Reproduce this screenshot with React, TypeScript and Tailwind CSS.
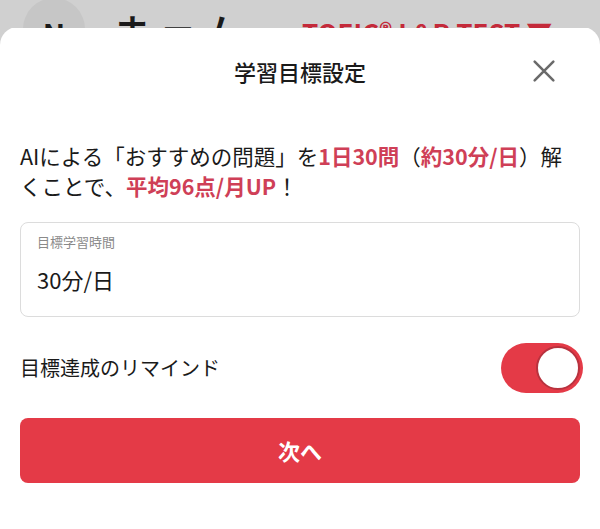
import { useState } from 'react'

// ── Background (page behind the sheet) ────────────────────────────────────────

function BehindHeader() {
  return (
    <div className="h-[28px] overflow-hidden bg-[#d0d0d0] relative">
      <div className="absolute left-[23px] top-[-2px] w-[62px] h-[62px] rounded-full bg-[#c6c6c6] flex items-center justify-center">
        <span className="text-[30px] font-bold text-[#1a1a1a] mt-[8px]">N</span>
      </div>
      <span className="absolute left-[116px] top-[12px] text-[32px] font-bold text-[#1a1a1a] tracking-[14px] leading-none">ホーム</span>
      <span className="absolute left-[302px] top-[19px] text-[26px] font-bold text-[#c42a3a] leading-none whitespace-nowrap">
        TOEIC® L&amp;R TEST ▼
      </span>
    </div>
  )
}

// ── Sheet ─────────────────────────────────────────────────────────────────────

function Toggle({ on, onChange }: { on: boolean; onChange: () => void }) {
  return (
    <button
      onClick={onChange}
      className={`w-[82px] h-[50px] rounded-full flex items-center p-[3px] ${on ? 'bg-[#e43a47] justify-end' : 'bg-[#e5e5e5] justify-start'}`}
    >
      <span className="w-[44px] h-[44px] rounded-full bg-white border-[2px] border-[#b8323e]" />
    </button>
  )
}

export default function App() {
  const [remind, setRemind] = useState(true)
  const red = 'text-[#cf3f57] font-bold'

  return (
    <div
      className="w-[600px] h-[529px] overflow-hidden bg-[#d0d0d0] flex flex-col"
      style={{ fontFamily: '"Noto Sans CJK JP", "Noto Sans", sans-serif' }}
    >
      <BehindHeader />

      <div className="flex-1 bg-white rounded-t-[18px] -mt-[1px] px-5">
        {/* Header */}
        <div className="h-[88px] relative flex items-center justify-center">
          <h1 className="text-[22px] font-medium text-[#1a1a1a]">学習目標設定</h1>
          <button className="absolute right-[22px] top-[30px] w-[28px] h-[28px] flex items-center justify-center">
            <svg viewBox="0 0 24 24" className="w-[28px] h-[28px]" fill="none" stroke="#6a6a6a" strokeWidth="2.2" strokeLinecap="round">
              <path d="M4 4L20 20M20 4L4 20" />
            </svg>
          </button>
        </div>

        {/* Description */}
        <p className="mt-[26px] text-[21.5px] leading-[30px] text-[#1a1a1a] whitespace-nowrap">
          AIによる「おすすめの問題」を<span className={red}>1日30問</span>（<span className={red}>約30分/日</span>）解
          <br />
          くことで、<span className={red}>平均96点/月UP</span>！
        </p>

        {/* Goal input */}
        <div className="mt-[21px] h-[95px] rounded-[8px] border border-[#dcdcdc] px-4 pt-[10px]">
          <p className="text-[13px] text-[#8a8a8a] leading-[18px]">目標学習時間</p>
          <p className="mt-[13px] text-[22px] text-[#1a1a1a] leading-[30px]">30分/日</p>
        </div>

        {/* Reminder */}
        <div className="mt-[26px] flex items-center justify-between">
          <span className="text-[20px] text-[#1a1a1a]">目標達成のリマインド</span>
          <div className="-mr-[3px]">
            <Toggle on={remind} onChange={() => setRemind((v) => !v)} />
          </div>
        </div>

        {/* Next */}
        <button className="mt-[25px] w-full h-[65px] rounded-[8px] bg-[#e43a47] text-white text-[22px] font-bold">
          次へ
        </button>
      </div>
    </div>
  )
}
